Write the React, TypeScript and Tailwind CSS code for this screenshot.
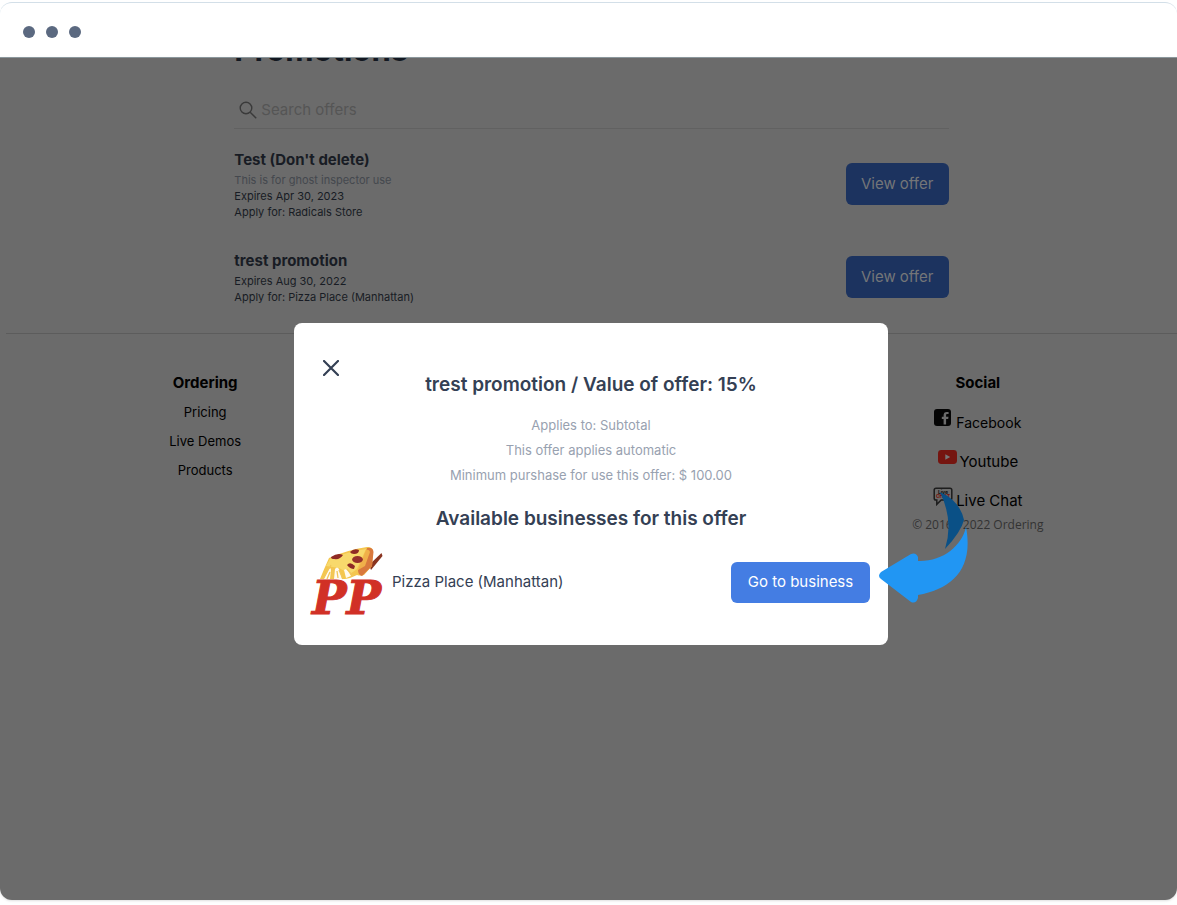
import React from "react";

type Offer = { title: string; note?: string; expires: string; store: string };

const offers: Offer[] = [
  {
    title: "Test (Don't delete)",
    note: "This is for ghost inspector use",
    expires: "Expires Apr 30, 2023",
    store: "Apply for: Radicals Store",
  },
  {
    title: "trest promotion",
    expires: "Expires Aug 30, 2022",
    store: "Apply for: Pizza Place (Manhattan)",
  },
];

function SearchIcon() {
  return (
    <svg viewBox="0 0 18 18" className="size-[18px] shrink-0" fill="none" stroke="#3a3a3a" strokeWidth="1.4" aria-hidden="true">
      <circle cx="7" cy="7" r="5.8" />
      <path d="M11.2 11.2 17.2 17.2" />
    </svg>
  );
}

function FacebookIcon() {
  return (
    <svg viewBox="0 0 17 17" className="size-[17px]" aria-hidden="true">
      <rect width="17" height="17" rx="3" fill="#050505" />
      <path d="M9.6 15.6V10H7.8V7.7h1.8V6.2c0-2.1 1.1-3.3 3.1-3.3h1.9v2.2h-1.3c-.9 0-1.2.4-1.2 1.2v1.4h2.4l-.3 2.3h-2.1v5.6z" fill="#6b6b6b" />
    </svg>
  );
}

function YoutubeIcon() {
  return (
    <svg viewBox="0 0 19 14" className="h-[14px] w-[19px]" aria-hidden="true">
      <rect width="19" height="14" rx="3.4" fill="#751510" />
      <path d="M7.3 4.2v5.6L12.2 7z" fill="#777" />
    </svg>
  );
}

function LiveChatIcon() {
  return (
    <svg viewBox="0 0 20 19" className="h-[19px] w-[20px]" aria-hidden="true">
      <path d="M3 1.2h14q1.8 0 1.8 1.8v8.2q0 1.8-1.8 1.8H8.200L3.800 17.400V13H3Q1.200 13 1.200 11.200V3Q1.200 1.200 3 1.200z" fill="#6b6b6b" stroke="#1d1d1d" strokeWidth="1.5" />
      <text x="10" y="6.6" textAnchor="middle" fontFamily="Inter, sans-serif" fontWeight="800" fontSize="5" fill="#151515">Live</text>
      <text x="10" y="11.4" textAnchor="middle" fontFamily="Inter, sans-serif" fontWeight="800" fontSize="5" fill="#751510">CHAT</text>
    </svg>
  );
}

function PizzaLogo() {
  return (
    <svg viewBox="0 0 72 72" className="size-[72px] shrink-0 overflow-visible" role="img" aria-label="Pizza Place logo">
      <path d="M57 19 69.500 7 70.500 10 59 24z" fill="#8a3420" />
      <path d="M17 12Q35 4 55 1q5-.5 6 4L60 20 52 29q-4 1-7 0l-7 3-5 1H8q4-10 9-21z" fill="#f4c64e" />
      <path d="M18 13Q35 6 54 3l-9 20-7 5-11-6-13-2z" fill="#f8d96c" />
      <path d="M55 2q6-1 6.500 4L60 20 50 30q-4-1-4-6l5-5z" fill="#d9793d" />
      <path d="M54 4q3-1 4 2l-5 14-7 4z" fill="#f0b04a" />
      <path d="M12 33l5-10q2-2 2 1l-1 9zM22 33l1-10q2-3 4 0l3 10zM34 32l-2-8q2-2 4 1l3 5z" fill="#fffaf0" />
      <path d="M11 33l8-14M20 33l1-11M31 33l-4-9M41 30l-6-7M15 33l3-7M26 32l-1-7" stroke="#f1c65a" strokeWidth="1.3" fill="none" />
      <path d="M19 11q7-5 12-2-3 5-9 4-3 0-3-2z" fill="#8f2a25" />
      <path d="M38 6q4-4 9-2 0 4-5 4-3 0-4-2z" fill="#8f2a25" />
      <ellipse cx="45.5" cy="13.5" rx="5.4" ry="3.5" fill="#96302a" />
      <path d="M35 19q3-4 8 1l-1 3q-4 0-7-4z" fill="#8f2a25" />
      <text x="0" y="68" fontFamily="'DejaVu Serif', serif" fontStyle="italic" fontWeight="700" fontSize="46" fill="#d13026" stroke="#d13026" strokeWidth="1">PP</text>
    </svg>
  );
}

function PointerArrow() {
  return (
    <svg viewBox="0 0 92 112" className="pointer-events-none absolute top-[433px] left-full -ml-[11px] h-[112px] w-[92px]" aria-hidden="true">
      <path d="M62 1Q82 10 86 29 83 41 67 58 76 30 62 1z" fill="#0a5086" />
      <path d="M88 36C96 78 74 98 40 104v3q-2 6-7 4L3 88Q-1 85 3 81L33 63q5-2 7 3v4C64 71 84 55 88 36z" fill="#2196f3" />
    </svg>
  );
}

export default function App() {
  return (
    <div className="min-h-screen bg-white pt-[2px] pb-[5px] font-['Inter','Liberation_Sans',sans-serif]">
      <header className="flex h-[55px] items-center gap-[11px] rounded-t-xl border-t border-[#d3dfe8] px-[23px] pt-1 pb-px">
        <span className="size-3 rounded-full bg-[#5b6980]" />
        <span className="size-3 rounded-full bg-[#5b6980]" />
        <span className="size-3 rounded-full bg-[#5b6980]" />
      </header>

      <div className="relative min-h-[843px] overflow-hidden rounded-b-xl border-t border-[#8b979c] bg-[#6b6b6b] pl-[6px] shadow-sm">
        <main className="mx-auto w-[61%]">
          <h1 className="-mt-[28px] text-[31px] leading-[40px] font-bold text-[#131821]">Promotions</h1>
          <label className="mt-[22px] flex h-[37px] items-center gap-1 border-b border-[#616161] pl-[5px]">
            <SearchIcon />
            <input
              type="search"
              aria-label="Search offers"
              placeholder="Search offers"
              className="w-full bg-transparent text-[15px] text-[#222] outline-none placeholder:text-[#555]"
            />
          </label>
          <ul className="mt-[19px] flex flex-col gap-[29px]">
            {offers.map((offer) => (
              <li key={offer.title} className="flex items-center justify-between">
                <div className="text-[11px] leading-[16px] text-[#181c24]">
                  <h2 className="text-[15px] leading-[24px] font-bold">{offer.title}</h2>
                  {offer.note && <p className="text-[#44484e]">{offer.note}</p>}
                  <p>{offer.expires}</p>
                  <p>{offer.store}</p>
                </div>
                <button type="button" className="h-[42px] w-[103px] rounded-md bg-[#1c335f] text-[15px] text-[#747678]">
                  View offer
                </button>
              </li>
            ))}
          </ul>
        </main>

        <footer className="mt-[28px] flex justify-between border-t border-[#5c5c5c] px-[6px] pt-[37px] text-center text-[13px] text-black">
          <nav className="w-1/3" aria-label="Ordering">
            <h2 className="text-[15px] leading-[24px] font-bold">Ordering</h2>
            <ul className="mt-[3px] leading-[29px]">
              <li><a href="#pricing">Pricing</a></li>
              <li><a href="#demos">Live Demos</a></li>
              <li><a href="#products">Products</a></li>
            </ul>
          </nav>
          <nav className="w-1/3" aria-label="Social">
            <h2 className="text-[15px] leading-[24px] font-bold">Social</h2>
            <ul className="mt-[12px]">
              <li className="h-[39px]">
                <a href="#facebook" className="inline-flex items-start gap-[5px] text-[14px]">
                  <span className="pt-[2px]"><FacebookIcon /></span>
                  <span className="pt-[6px] leading-[20px]">Facebook</span>
                </a>
              </li>
              <li className="h-[39px]">
                <a href="#youtube" className="inline-flex items-start gap-[3px] text-[15px]">
                  <span className="pt-[4px]"><YoutubeIcon /></span>
                  <span className="pt-[6px] leading-[20px]">Youtube</span>
                </a>
              </li>
              <li className="h-[39px]">
                <a href="#chat" className="inline-flex items-start gap-[3px] text-[15px]">
                  <span className="pt-[2px]"><LiveChatIcon /></span>
                  <span className="pt-[6px] leading-[20px]">Live Chat</span>
                </a>
              </li>
            </ul>
            <p className="-mt-[9px] font-['Open_Sans',sans-serif] text-[12px] leading-[20px] text-[#333]">© 2016 - 2022 Ordering</p>
          </nav>
        </footer>

        <div className="absolute inset-0 flex items-start justify-center pt-[265px] pl-[5px]">
          <section role="dialog" aria-modal="true" aria-labelledby="offer-title" className="w-[594px] max-w-full rounded-lg bg-white px-[18px] pb-[27px] text-center text-[#344054]">
            <div className="flex h-[48px] items-end pl-[11px]">
              <button type="button" aria-label="Close" className="-mb-[5px]">
                <svg viewBox="0 0 16 16" className="size-[16px]" stroke="#344054" strokeWidth="2.2" strokeLinecap="round" aria-hidden="true">
                  <path d="M1 1l14 14M15 1 1 15" />
                </svg>
              </button>
            </div>
            <h2 id="offer-title" className="text-[19px] leading-[28px] font-semibold">trest promotion / Value of offer: 15%</h2>
            <div className="mt-[14px] text-[13px] leading-[25px] text-[#98a1b0]">
              <p>Applies to: Subtotal</p>
              <p>This offer applies automatic</p>
              <p>Minimum purshase for use this offer: $ 100.00</p>
            </div>
            <h3 className="mt-[17px] text-[19px] leading-[28px] font-semibold">Available businesses for this offer</h3>
            <div className="mt-[13px] flex items-center">
              <PizzaLogo />
              <p className="ml-[8px] text-[15px]">Pizza Place (Manhattan)</p>
              <button type="button" className="ml-auto h-[41px] w-[139px] rounded-md bg-[#447de3] text-[15px] text-white">
                Go to business
              </button>
            </div>
          </section>
          <div className="absolute top-0 left-1/2 ml-[3px] w-[297px]">
            <PointerArrow />
          </div>
        </div>
      </div>
    </div>
  );
}
